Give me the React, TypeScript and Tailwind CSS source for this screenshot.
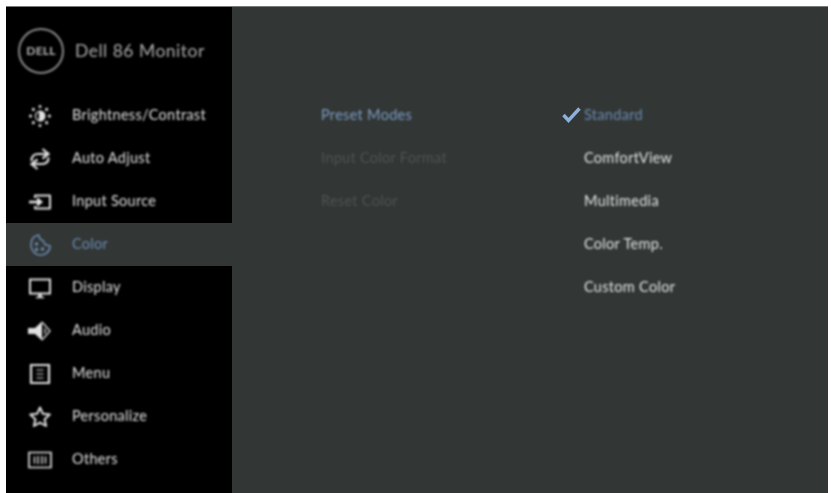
import React from 'react';

const iconProps = {
  width: 24,
  height: 24,
  viewBox: '0 0 24 24',
  fill: 'none',
  stroke: 'currentColor',
  strokeWidth: 2,
};

const Brightness = () => (
  <svg {...iconProps}>
    <circle cx="12" cy="12" r="4.500" strokeWidth="1.300" />
    <path d="M12 7.500a4.500 4.500 0 0 1 0 9z" fill="currentColor" />
    <path
      d="M12 2.500v.1M12 21.400v.1M2.500 12h.1M21.400 12h.1M5.300 5.300l.1.1M18.600 18.600l.1.1M5.300 18.700l.1-.1M18.600 5.400l.1-.1"
      strokeWidth="3"
      strokeLinecap="round"
    />
  </svg>
);

const AutoAdjust = () => (
  <svg {...iconProps} strokeWidth="2.200">
    <path d="M3.500 14c0-4.500 2.500-7 6.500-7h9" />
    <path d="M14.500 2 20.500 7l-6 4.500" />
    <path d="M20.500 10.500c0 4.500-2.500 6.500-6.500 6.500H5" />
    <path d="M9.500 12.500 3.500 17l6 5" />
  </svg>
);

const InputSource = () => (
  <svg {...iconProps}>
    <path d="M7 8V5.500h15v13H7V16" strokeLinejoin="round" />
    <path d="M1 12h12" strokeWidth="2.600" />
    <path d="M9.500 8l5 4-5 4z" fill="currentColor" strokeWidth="1" />
  </svg>
);

const Palette = () => (
  <svg {...iconProps} strokeWidth="1.600">
    <path d="M10.500 2c-5 1-7.500 5-7.500 10 0 5.500 4 10 9.500 10 5 0 9.500-3.500 9.500-9-1.500-1-3.500-.5-5-1.500-1-1-.5-2.500-1.500-3.500-1.500-1-4-.5-5-6.500z" />
    <circle cx="8.500" cy="11" r="1.800" fill="currentColor" stroke="none" />
    <circle cx="14.500" cy="16" r="1.800" fill="currentColor" stroke="none" />
    <circle cx="8.500" cy="16.500" r="1.800" fill="currentColor" stroke="none" />
  </svg>
);

const Display = () => (
  <svg {...iconProps}>
    <path d="M2 3.500h20v14H2z" />
    <path d="M12 17v4" strokeWidth="3.400" />
    <path d="M8 21.500h8" strokeWidth="1.500" />
  </svg>
);

const Audio = () => (
  <svg {...iconProps}>
    <path d="M0 9h7l7-6.500v19L7 15H0z" fill="currentColor" stroke="none" />
    <path d="M14 3l8 9-8 9" strokeWidth="1.300" />
    <path d="M16.500 9.500c1 1.500 1 3.500 0 5" strokeWidth="1.300" />
  </svg>
);

const MenuIcon = () => (
  <svg {...iconProps} strokeWidth="2.200">
    <path d="M3 3h18v18H3z" />
    <path d="M8.500 8h7M8.500 12h7M8.500 16h7" strokeWidth="1.200" />
  </svg>
);

const Star = () => (
  <svg {...iconProps}>
    <path d="M12 2.500l2.900 6.300 6.900.8-5.200 4.600 1.500 6.800-6.100-3.400-6.100 3.400 1.500-6.800-5.200-4.600 6.900-.8z" strokeLinejoin="round" />
  </svg>
);

const Others = () => (
  <svg {...iconProps} strokeWidth="1.700">
    <path d="M1 4.500h22v15H1z" />
    <path d="M10 8v8M14 8v8M6.500 8.500v7M17.500 8.500v7" strokeWidth="1.400" />
  </svg>
);

const items = [
  { label: 'Brightness/Contrast', icon: <Brightness /> },
  { label: 'Auto Adjust', icon: <AutoAdjust /> },
  { label: 'Input Source', icon: <InputSource /> },
  { label: 'Color', icon: <Palette />, active: true },
  { label: 'Display', icon: <Display /> },
  { label: 'Audio', icon: <Audio /> },
  { label: 'Menu', icon: <MenuIcon /> },
  { label: 'Personalize', icon: <Star /> },
  { label: 'Others', icon: <Others /> },
];

const options = ['Standard', 'ComfortView', 'Multimedia', 'Color Temp.', 'Custom Color'];

export default function App() {
  return (
    <div className="h-[493px] w-[831px] overflow-hidden bg-white pl-[6px] pr-[3px] pt-[6px] font-['Lato',sans-serif]">
      <div className="flex h-full border-t border-[#777a79] bg-[#323635]">
        {/* Sidebar */}
        <aside className="w-[226px] shrink-0 bg-black">
          <div className="flex h-[87px] items-center pl-[12px]">
            <div className="flex h-[46px] w-[46px] items-center justify-center rounded-full border-2 border-[#8a8a8a] blur-[0.8px]">
              <span className="text-[12px] font-black tracking-[0.200px] text-[#a8a8a8]">DELL</span>
            </div>
            <span className="ml-[11px] mt-[1px] text-[17.500px] tracking-[0.500px] text-[#acacac] blur-[0.8px]">Dell 86 Monitor</span>
          </div>
          {items.map(item => (
            <div
              key={item.label}
              className={`flex h-[43px] items-center ${item.active ? 'bg-[#323635] text-[#6a8bb0]' : 'text-[#e0e0e0]'}`}
            >
              <div className="flex w-[66px] justify-center pl-[2px] blur-[0.8px]">{item.icon}</div>
              <span className="mb-[1px] text-[14.500px] tracking-[0.300px] blur-[0.8px]">{item.label}</span>
            </div>
          ))}
        </aside>

        {/* Main panel */}
        <main className="flex flex-1 pl-[89px] pt-[86px] text-[14.500px] tracking-[0.300px]">
          <div className="w-[241px] blur-[0.8px]">
            <div className="flex h-[43px] items-center text-[#7c9cc2]">Preset Modes</div>
            <div className="flex h-[43px] items-center text-[#505352]">Input Color Format</div>
            <div className="flex h-[43px] items-center text-[#505352]">Reset Color</div>
          </div>
          <div>
            {options.map((opt, i) => (
              <div key={opt} className="flex h-[43px] items-center">
                <div className="w-[22px] text-[#8fb0d8] blur-[0.5px]">
                  {i === 0 && (
                    <svg width="19" height="16" viewBox="0 0 19 16" fill="none" stroke="currentColor" strokeWidth="3.400">
                      <path d="M1.500 8l5 5.500L17.500 1.500" />
                    </svg>
                  )}
                </div>
                <span className={`blur-[0.8px] ${i === 0 ? 'text-[#6a8bb0]' : 'text-[#e4e6e5]'}`}>{opt}</span>
              </div>
            ))}
          </div>
        </main>
      </div>
    </div>
  );
}
